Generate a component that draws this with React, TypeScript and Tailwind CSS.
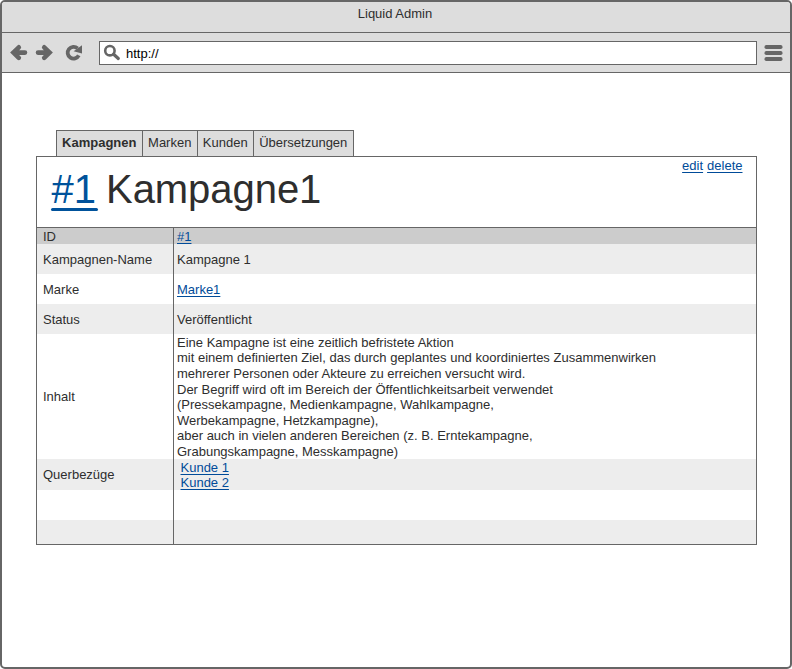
import React from "react";

const link = "text-[#004b99] underline underline-offset-[1.5px] decoration-1";

interface RowProps {
  label?: string;
  className: string;
  labelClass?: string;
  valueClass?: string;
  children?: React.ReactNode;
}

function Row({ label, className, labelClass = "pt-[2px]", valueClass = "pt-[2px] pl-[3px]", children }: RowProps) {
  return (
    <div className={`flex shrink-0 ${className}`}>
      <div className={`flex w-[137px] shrink-0 items-center border-r border-[#666] pl-1.5 ${labelClass}`}>{label}</div>
      <div className={`flex flex-1 flex-col items-start justify-center ${valueClass}`}>{children}</div>
    </div>
  );
}

const tabs = [
  { name: "Kampagnen", style: "w-[87px] border-l font-bold" },
  { name: "Marken", style: "w-[55px]" },
  { name: "Kunden", style: "w-[56px]" },
  { name: "Übersetzungen", style: "w-[100px]" },
];

const content = [
  "Eine Kampagne ist eine zeitlich befristete Aktion",
  "mit einem definierten Ziel, das durch geplantes und koordiniertes Zusammenwirken",
  "mehrerer Personen oder Akteure zu erreichen versucht wird.",
  "Der Begriff wird oft im Bereich der Öffentlichkeitsarbeit verwendet",
  "(Pressekampagne, Medienkampagne, Wahlkampagne,",
  "Werbekampagne, Hetzkampagne),",
  "aber auch in vielen anderen Bereichen (z. B. Erntekampagne,",
  "Grabungskampagne, Messkampagne)",
];

export default function App() {
  return (
    <div className="flex h-[669px] w-[792px] flex-col overflow-hidden rounded-[5px] border-2 border-[#666] bg-white font-['Liberation_Sans',Arial,sans-serif] text-[13px] leading-[15.6px] whitespace-nowrap text-[#2e2e2e]">
      <header className="flex h-[31px] shrink-0 justify-center border-b border-[#666] bg-[#ddd] pt-1 pr-[2px]">Liquid Admin</header>
      <div className="flex h-10 shrink-0 items-center border-b border-[#666] bg-[#ddd]">
        <svg className="h-[39px] w-[97px] shrink-0" viewBox="2 33 97 39" fill="none" stroke="#666">
          <path d="M18.8 47.3 L13.4 52.6 L18.8 57.9 M14 52.6 H25" strokeWidth="4.6" strokeLinecap="round" strokeLinejoin="miter" />
          <path d="M44.2 47.3 L49.6 52.6 L44.2 57.9 M49 52.6 H38" strokeWidth="4.6" strokeLinecap="round" strokeLinejoin="miter" />
          <path d="M77.6 48.4 A5.9 5.9 0 1 0 78.8 55.4" strokeWidth="3.8" />
          <path d="M82 45.3 V53.6 L73.6 51.2 Z" fill="#666" stroke="none" />
        </svg>
        <div className="flex h-6 w-[658px] items-center border border-[#666] bg-white">
          <svg className="h-[22px] w-[26px] shrink-0" viewBox="100 42 26 22" fill="none" stroke="#666">
            <circle cx="109.9" cy="50.7" r="4.7" strokeWidth="2.6" />
            <path d="M113.6 54.3 L118.3 58.5" strokeWidth="3.2" strokeLinecap="round" />
          </svg>
          <span className="pt-[2px] text-black">http://</span>
        </div>
        <svg className="ml-[7px] h-[18px] w-[19px]" viewBox="0 0 19 18" fill="#666">
          <rect x="0.5" y="1" width="18" height="4" rx="1.8" />
          <rect x="0.5" y="7" width="18" height="4" rx="1.8" />
          <rect x="0.5" y="13" width="18" height="4" rx="1.8" />
        </svg>
      </div>
      <nav className="mt-[57px] ml-[54px] flex h-[26px] shrink-0">
        {tabs.map((t) => (
          <div key={t.name} className={`flex justify-center border-t border-r border-[#666] bg-[#ddd] pt-1 pr-[0.5px] ${t.style}`}>{t.name}</div>
        ))}
      </nav>
      <main className="ml-[34px] flex h-[389px] w-[721px] shrink-0 flex-col border border-[#666]">
        <div className="flex h-[71px] shrink-0 justify-between border-b border-[#666] pr-[13.5px] pl-[14px]">
          <h1 className="flex gap-2 pt-2 text-[40px] leading-[48px] tracking-[-0.05px]">
            <a className="flex w-[47px] flex-col text-[#00529b]">
              <span className="h-[43px] pl-[0.5px]">#1</span>
              <span className="h-[3px] rounded-full bg-[#00529b]" />
            </a>
            <span>Kampagne1</span>
          </h1>
          <div className="flex gap-1 pt-px">
            <a className={link}>edit</a>
            <a className={link}>delete</a>
          </div>
        </div>
        <Row label="ID" className="h-4 bg-[#ccc]"><a className={link}>#1</a></Row>
        <Row label="Kampagnen-Name" className="h-[30px] bg-[#ededed]">Kampagne 1</Row>
        <Row label="Marke" className="h-[30px]"><a className={link}>Marke1</a></Row>
        <Row label="Status" className="h-[30px] bg-[#ededed]">Veröffentlicht</Row>
        <Row label="Inhalt" className="h-[125px]" labelClass="" valueClass="pt-[1.2px] pl-[3px]">
          {content.map((line) => <div key={line}>{line}</div>)}
        </Row>
        <Row label="Querbezüge" className="h-[31px] bg-[#ededed]" labelClass="" valueClass="pt-[1.2px] pl-[6.5px]">
          <a className={link}>Kunde 1</a>
          <a className={link}>Kunde 2</a>
        </Row>
        <Row className="h-[30px]" />
        <Row className="h-6 bg-[#ededed]" />
      </main>
    </div>
  );
}
